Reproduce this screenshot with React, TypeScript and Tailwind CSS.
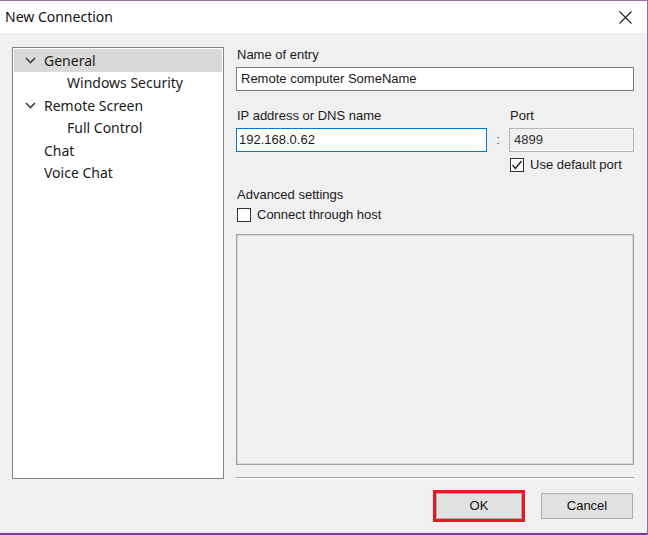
import React from "react";

const Chevron = () => (
  <svg width="11" height="7" viewBox="0 0 11 7" className="block">
    <path d="M1 1 L5.5 5.5 L10 1" fill="none" stroke="#404040" strokeWidth="1.6" />
  </svg>
);

const TreeRow = ({
  label,
  level,
  chevron,
  selected,
}: {
  label: string;
  level: number;
  chevron?: boolean;
  selected?: boolean;
}) => (
  <div
    className={`h-[22.5px] flex items-center ${selected ? "bg-[#d9d9d9]" : ""}`}
  >
    <div className="w-[30px] flex justify-end pr-[8px]">{chevron ? <Chevron /> : null}</div>
    <span className={level === 1 ? "pl-[23px]" : ""}>{label}</span>
  </div>
);

const CheckBox = ({ checked }: { checked?: boolean }) => (
  <div className="w-[14px] h-[14px] border border-[#333333] bg-white flex items-center justify-center">
    {checked ? (
      <svg width="12" height="12" viewBox="0 0 12 12">
        <path d="M1.5 6 L4.5 9.5 L10.5 2" fill="none" stroke="#222" strokeWidth="1.4" />
      </svg>
    ) : null}
  </div>
);

export default function App() {
  return (
    <div
      className="w-[648px] h-[535px] bg-[#f0f0f0] border-t border-r border-[#9a6aa8] flex flex-col overflow-hidden"
      style={{ fontFamily: "'Liberation Sans', Arial, sans-serif" }}
    >
      {/* Title bar */}
      <div className="h-[32px] bg-white flex items-center justify-between pl-[5px] pr-[15px] shrink-0">
        <span
          className="text-[14px] text-[#111] leading-none"
          style={{ fontFamily: "'Noto Sans', sans-serif" }}
        >
          New Connection
        </span>
        <svg width="13" height="13" viewBox="0 0 13 13">
          <path d="M0.5 0.5 L12.5 12.5 M12.5 0.5 L0.5 12.5" stroke="#222" strokeWidth="1.1" />
        </svg>
      </div>

      {/* Body */}
      <div className="flex-1 flex flex-col">
        <div className="flex pl-[12px] pt-[14px] gap-[12px]">
          {/* Tree */}
          <div
            className="w-[212px] h-[432px] bg-white border border-[#828282] p-[1px] text-[14px] text-[#1a1a1a]"
            style={{ fontFamily: "'Noto Sans', sans-serif" }}
          >
            <TreeRow label="General" level={0} chevron selected />
            <TreeRow label="Windows Security" level={1} />
            <TreeRow label="Remote Screen" level={0} chevron />
            <TreeRow label="Full Control" level={1} />
            <TreeRow label="Chat" level={0} />
            <TreeRow label="Voice Chat" level={0} />
          </div>

          {/* Right column */}
          <div className="w-[398px] flex flex-col text-[13px] leading-[16px] text-[#1a1a1a]">
            <div className="h-[16px] pl-[1px]">Name of entry</div>
            <div className="mt-[4px] h-[24px] bg-white border border-[#7a7a7a] flex items-center pl-[4px]">
              Remote computer SomeName
            </div>

            <div className="flex mt-[17px]">
              <div className="w-[251px] flex flex-col">
                <div className="h-[16px] pl-[1px]">IP address or DNS name</div>
                <div className="mt-[4px] h-[24px] bg-white border border-[#0078d7] flex items-center pl-[2px]">
                  192.168.0.62
                </div>
              </div>
              <div className="w-[22px] flex flex-col">
                <div className="mt-[20px] h-[24px] flex items-center justify-center text-[#555]">:</div>
              </div>
              <div className="flex-1 flex flex-col">
                <div className="h-[16px] pl-[1px]">Port</div>
                <div className="mt-[4px] h-[24px] bg-[#f0f0f0] border border-[#b5b5b5] flex items-center pl-[4px] text-[#333]">
                  4899
                </div>
                <div className="mt-[5px] h-[16px] flex items-center gap-[6px] pl-[1px]">
                  <CheckBox checked />
                  <span>Use default port</span>
                </div>
              </div>
            </div>

            <div className="mt-[14px] h-[16px] pl-[1px]">Advanced settings</div>
            <div className="mt-[4px] h-[16px] flex items-center gap-[6px] pl-[1px]">
              <CheckBox />
              <span>Connect through host</span>
            </div>

            <div className="mt-[11px] h-[231px] border border-[#a0a0a0] shadow-[inset_1px_1px_0_#d8d8d8,inset_-1px_-1px_0_#d8d8d8] bg-[#f0f0f0]" />

            <div className="mt-[12px] h-[2px] border-t border-[#a0a0a0] border-b border-b-white" />
          </div>
        </div>

        {/* Buttons */}
        <div className="flex justify-end pr-[14px] mt-[11px] gap-[16px] text-[13px]">
          <div className="w-[92px] h-[32px] border-[3px] border-[#e41b23] flex">
            <div className="flex-1 bg-[#e1e1e1] border border-[#adadad] flex items-center justify-center text-[#111]">
              OK
            </div>
          </div>
          <div className="w-[92px] h-[32px] py-[3px] flex">
            <div className="flex-1 bg-[#e1e1e1] border border-[#adadad] flex items-center justify-center text-[#111]">
              Cancel
            </div>
          </div>
        </div>
      </div>

      <div className="h-[1px] bg-[#f3e6f5]" />
      <div className="h-[2px] bg-[#7d3b95]" />
    </div>
  );
}
